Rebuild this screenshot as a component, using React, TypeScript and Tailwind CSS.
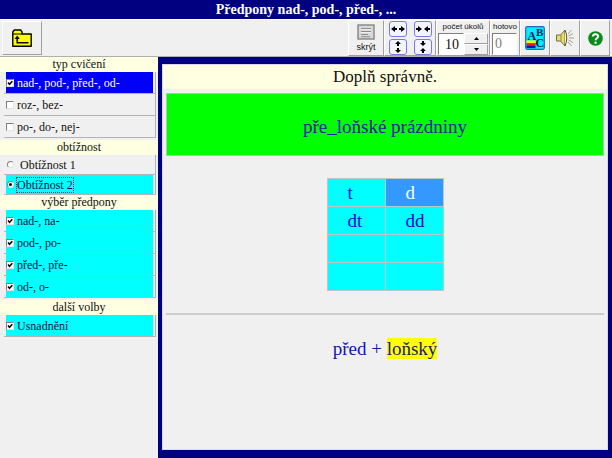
import { useState } from 'react';
import type { ReactNode } from 'react';

const raised = 'border border-t-white border-l-white border-r-[#a0a0a0] border-b-[#a0a0a0] bg-[#f0f0f0]';
const sunken = 'border border-t-[#808080] border-l-[#808080] border-r-white border-b-white bg-white';

const exerciseTypes = ['nad-, pod-, před-, od-', 'roz-, bez-', 'po-, do-, nej-'];
const prefixes = ['nad-, na-', 'pod-, po-', 'před-, pře-', 'od-, o-'];
const answers = [['t', 'd'], ['dt', 'dd'], ['', ''], ['', '']];

function SectionTitle({ children }: { children: ReactNode }) {
  return <h2 className="h-[15px] bg-[#ffffe1] text-center text-[12px] leading-[14px]">{children}</h2>;
}

type OptionProps = { label: string; checked: boolean; onChange: () => void; fill?: string };

function CheckRow({ label, checked, onChange, fill = '' }: OptionProps) {
  return (
    <label className="mr-0.5 ml-1 flex h-[22px] border-r border-b border-[#b4b4b4] pr-0.5 pl-0.5">
      <span className={`flex flex-1 items-center gap-[3px] ${fill}`}>
        <span className="grid size-2 shrink-0">
          <input type="checkbox" checked={checked} onChange={onChange} className="col-start-1 row-start-1 size-2 appearance-none border border-t-[#808080] border-l-[#808080] border-r-[#e3e3e3] border-b-[#e3e3e3] bg-white" />
          {checked && (
            <svg viewBox="0 0 8 8" className="pointer-events-none col-start-1 row-start-1 size-2">
              <path d="M2 3.5 3.5 5.3 6.3 2.2" fill="none" stroke="#000" strokeWidth="1.5" />
            </svg>
          )}
        </span>
        <span className="text-[12px] leading-4">{label}</span>
      </span>
    </label>
  );
}

function RadioRow({ label, checked, onChange, fill = '' }: OptionProps) {
  return (
    <label className="mr-0.5 ml-1 flex h-5 border-r border-b border-[#b4b4b4] pr-0.5 pl-0.5">
      <span className={`flex flex-1 items-center gap-[3px] ${fill}`}>
        <span className="grid size-2 shrink-0 place-items-center">
          <input type="radio" name="level" checked={checked} onChange={onChange} className="col-start-1 row-start-1 size-[7px] appearance-none rounded-full border border-t-[#808080] border-l-[#808080] border-r-[#e3e3e3] border-b-[#e3e3e3] bg-white" />
          {checked && <span className="pointer-events-none col-start-1 row-start-1 size-[3px] rounded-full bg-black" />}
        </span>
        <span className={`text-[12px] leading-[14px] ${checked ? 'outline outline-dotted outline-[#204060]' : 'pl-[3px]'}`}>{label}</span>
      </span>
    </label>
  );
}

function ArrowButton({ title, d }: { title: string; d: string }) {
  return (
    <button title={title} className="flex h-4 w-[18px] items-center justify-center rounded-[3px] border border-[#7878e8] bg-[#f4f4ff]">
      <svg viewBox="0 0 16 14" className="h-3.5 w-4 shrink-0"><path d={d} /></svg>
    </button>
  );
}

function FolderIcon() {
  return (
    <svg viewBox="0 0 20 18" className="h-[18px] w-5">
      <path d="M.8 17.2V3L2.3 1h6.4L10 2.8V5h9.2v12.2Z" fill="#ff0" stroke="#000" strokeWidth="1.4" strokeLinejoin="round" />
      <path d="M1 5h9" stroke="#000" />
      <path d="M5.2 8.5v5.2h11.3" fill="none" stroke="#000" strokeWidth="1.5" />
      <path d="M2.6 10 5.2 6.6 7.8 10Z" />
    </svg>
  );
}

function PanelIcon() {
  return (
    <svg viewBox="0 0 18 16" className="h-4 w-[18px]">
      <rect x="1" y="1" width="16" height="14" fill="#d8d8d8" stroke="#858585" strokeWidth="1.4" />
      <path d="M4 4.5h10M4 7.5h10M4 10.5h7M4 12.8h9" stroke="#8c8c8c" />
      <path d="M4 5.5h10M4 8.5h10" stroke="#fff" strokeWidth=".6" />
    </svg>
  );
}

function LettersIcon() {
  return (
    <svg viewBox="0 0 20 24" className="h-6 w-5">
      <rect x=".7" y=".7" width="18.6" height="22.6" rx="1.5" fill="#0ef" stroke="#2468b8" strokeWidth="1.2" />
      <rect x="1.5" y="14.5" width="9" height="2.6" fill="#ff0" />
      <rect x="1.5" y="17" width="9" height="2.6" fill="#f02020" />
      <rect x="1.5" y="19.5" width="9" height="2.6" fill="#1010c0" />
      <g fill="#001850" fontFamily="Liberation Serif, serif" fontWeight="bold" fontSize="12">
        <text x="2.5" y="14">A</text>
        <text x="11" y="9.5" fontSize="11">B</text>
        <text x="10.5" y="20.5">C</text>
      </g>
    </svg>
  );
}

function SpeakerIcon() {
  return (
    <svg viewBox="0 0 20 20" className="size-5">
      <path d="M1.5 7h4l4.5-5v16l-4.5-5h-4Z" fill="#e8dc70" stroke="#707040" />
      <path d="M6 7v6" stroke="#8c8440" />
      <path d="M10 2q3.5 8 0 16" fill="#fff8c0" stroke="#55552c" />
      <path d="m13 6 3.5-4M13.5 8 18 5.5M14 10h5M13.5 12l4.5 2.5M13 14l3.5 4" fill="none" stroke="#a0a0a0" />
    </svg>
  );
}

function HelpIcon() {
  return (
    <svg viewBox="0 0 14 14" className="size-[15px]">
      <circle cx="7" cy="7" r="6.8" fill="#0a8a1a" />
      <path d="M4.6 5.2C4.7 2.4 9.5 2.4 9.5 5c0 1.8-2.4 1.8-2.4 3.6" fill="none" stroke="#fff" strokeWidth="1.9" />
      <circle cx="7.1" cy="10.9" r="1.1" fill="#fff" />
    </svg>
  );
}

export default function App() {
  const [types, setTypes] = useState([true, false, false]);
  const [level, setLevel] = useState(2);
  const [chosen, setChosen] = useState([true, true, true, true]);
  const [easier, setEasier] = useState(true);
  const [count, setCount] = useState(10);
  const [answer, setAnswer] = useState('d');

  const toggle = (list: boolean[], i: number) => list.map((v, n) => (n === i ? !v : v));

  return (
    <div className="flex min-h-screen flex-col bg-[#f0f0f0] font-['Liberation_Serif',serif] text-[#101010]">
      <h1 className="h-[19px] bg-[#000080] text-center text-[14px] leading-[19px] font-bold text-white">Předpony nad-, pod-, před-, ...</h1>

      <div className="flex h-[38px] items-stretch border-t border-b border-t-white border-b-[#b0b0b0] px-0.5">
        <button title="Zpět" className={`my-px flex w-10 items-center justify-center ${raised}`}><FolderIcon /></button>
        <div className="ml-auto flex font-['Liberation_Sans',sans-serif] text-[9px]">
          <button className={`flex w-9 flex-col items-center justify-center gap-0.5 leading-[10px] ${raised}`}>
            <PanelIcon />
            skrýt
          </button>
          <div className={`grid w-[52px] grid-cols-2 place-items-center content-center gap-y-0.5 ${raised}`}>
            <ArrowButton title="Rozšířit" d="M1 7 5 4v2h2v2H5v2ZM15 7l-4-3v2H9v2h2v2Z" />
            <ArrowButton title="Zúžit" d="M7 7 3 4v2H1v2h2v2ZM9 7l4-3v2h2v2h-2v2Z" />
            <ArrowButton title="Zvýšit" d="m8 1 3 3H9v2H7V4H5ZM8 13l3-3H9V8H7v2H5Z" />
            <ArrowButton title="Snížit" d="m8 6 3-3H9V1H7v2H5ZM8 8l3 3H9v2H7v-2H5Z" />
          </div>
          <div className={`flex w-[54px] flex-col px-px ${raised}`}>
            <label htmlFor="count" className="text-center text-[8px] leading-3 whitespace-nowrap">počet úkolů</label>
            <div className="flex h-[22px]">
              <input id="count" value={count} onChange={e => setCount(+e.target.value || 0)} className={`w-[26px] pl-1.5 font-['Liberation_Serif',serif] text-[14px] ${sunken}`} />
              <div className="flex flex-1 flex-col">
                <button title="Více" onClick={() => setCount(count + 1)} className={`flex flex-1 items-center justify-center ${raised}`}><svg viewBox="0 0 5 3" className="h-[3px] w-[5px]"><path d="M0 3 2.5 0 5 3Z" /></svg></button>
                <button title="Méně" onClick={() => setCount(Math.max(0, count - 1))} className={`flex flex-1 items-center justify-center ${raised}`}><svg viewBox="0 0 5 3" className="h-[3px] w-[5px]"><path d="M0 0h5L2.5 3Z" /></svg></button>
              </div>
            </div>
          </div>
          <div className={`flex w-[30px] flex-col px-px ${raised}`}>
            <label htmlFor="done" className="text-center text-[8px] leading-3">hotovo</label>
            <input id="done" value="0" readOnly className={`h-[22px] w-[25px] pl-0.5 font-['Liberation_Serif',serif] text-[14px] text-[#808080] ${sunken}`} />
          </div>
          <button title="Písmo" className={`flex w-[30px] items-center justify-center ${raised}`}><LettersIcon /></button>
          <button title="Zvuk" className={`flex w-[30px] items-center justify-center ${raised}`}><SpeakerIcon /></button>
          <button title="Nápověda" className={`flex w-[30px] items-center justify-center ${raised}`}><HelpIcon /></button>
        </div>
      </div>

      <div className="flex flex-1">
        <aside className="flex w-[158px] shrink-0 flex-col">
          <SectionTitle>typ cvičení</SectionTitle>
          {exerciseTypes.map((t, i) => (
            <CheckRow key={t} label={t} checked={types[i]} onChange={() => setTypes(toggle(types, i))} fill={types[i] ? 'bg-[#0000f8] text-[#ffffe1]' : ''} />
          ))}
          <div className="mt-0.5"><SectionTitle>obtížnost</SectionTitle></div>
          {[1, 2].map(n => (
            <RadioRow key={n} label={`Obtížnost ${n}`} checked={level === n} onChange={() => setLevel(n)} fill={level === n ? 'bg-[#00ffff] text-[#101040]' : ''} />
          ))}
          <SectionTitle>výběr předpony</SectionTitle>
          {prefixes.map((p, i) => (
            <CheckRow key={p} label={p} checked={chosen[i]} onChange={() => setChosen(toggle(chosen, i))} fill="bg-[#00ffff] text-[#101040]" />
          ))}
          <div className="mt-0.5"><SectionTitle>další volby</SectionTitle></div>
          <CheckRow label="Usnadnění" checked={easier} onChange={() => setEasier(!easier)} fill="bg-[#00ffff] text-[#101040]" />
        </aside>

        <main className="flex flex-1 bg-[#000080] pt-[7px] pr-1 pb-2 pl-1">
          <div className="flex flex-1 flex-col border border-[#d8d8f0] bg-[#f0f0f0]">
            <p className="h-6 bg-[#ffffe1] text-center text-[17px] leading-6">Doplň správně.</p>
            <p className="mx-[3px] mt-1 h-[63px] border border-[#b0c8b0] bg-[#00ff00] text-center text-[19px] leading-[66px] text-[#2020a0]">pře_loňské prázdniny</p>
            <table className="mx-auto mt-[22px] border-collapse border border-t-[#808080] border-l-[#808080] border-[#c0c0c0]">
              <tbody>
                {answers.map((row, r) => (
                  <tr key={r}>
                    {row.map((a, c) => (
                      <td key={c} className="border border-[#b8c8c8] p-0">
                        <button
                          onClick={() => a && setAnswer(a)}
                          className={`block h-[27px] w-[57px] pl-5 text-left text-[19px] leading-6 ${a && a === answer ? 'bg-[#3399ff] text-white' : 'bg-[#00ffff] text-[#0000e0]'}`}
                        >
                          {a}
                        </button>
                      </td>
                    ))}
                  </tr>
                ))}
              </tbody>
            </table>
            <hr className="mx-[3px] mt-[22px] border-t-2 border-[#cccccc]" />
            <p className="mt-5 text-center text-[19px] leading-7 text-[#1414b4]">
              před + <mark className="bg-[#ffff00] text-[#202060]">loňský</mark>
            </p>
          </div>
        </main>
      </div>
    </div>
  );
}
